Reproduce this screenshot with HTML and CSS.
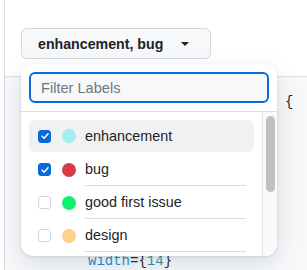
FILE: index.html
```html
<!DOCTYPE html>
<html>
<head>
<meta charset="utf-8">
<link rel="stylesheet" href="styles.css">
</head>
<body>
<div class="page">
  <div class="top">
    <button class="picker">
      <span class="picker-label">enhancement, bug</span>
      <span class="caret"></span>
    </button>
  </div>
  <div class="code">
    <div class="line l1">{</div>
    <div class="line">&nbsp;</div>
    <div class="line">&nbsp;</div>
    <div class="line">&nbsp;</div>
    <div class="line">&nbsp;</div>
    <div class="line">&nbsp;</div>
    <div class="line">&nbsp;</div>
    <div class="line">&nbsp;</div>
    <div class="line l9"><span class="attr">width</span><span class="punc">={</span><span class="num">14</span><span class="punc">}</span></div>
  </div>

  <div class="menu">
    <div class="menu-head">
      <div class="filter">Filter Labels</div>
    </div>
    <div class="menu-body">
      <div class="items">
        <div class="item active">
          <span class="cb checked"><svg viewBox="0 0 12 12" width="10" height="10"><path d="M2.5 6.2 L5 8.6 L9.6 3.4" fill="none" stroke="#fff" stroke-width="1.8" stroke-linecap="round" stroke-linejoin="round"/></svg></span>
          <span class="dot" style="background:#a2eeef"></span>
          <span class="name">enhancement</span>
        </div>
        <div class="item">
          <span class="cb checked"><svg viewBox="0 0 12 12" width="10" height="10"><path d="M2.5 6.2 L5 8.6 L9.6 3.4" fill="none" stroke="#fff" stroke-width="1.8" stroke-linecap="round" stroke-linejoin="round"/></svg></span>
          <span class="dot" style="background:#d73a4a"></span>
          <span class="name">bug</span>
        </div>
        <div class="item">
          <span class="cb"></span>
          <span class="dot" style="background:#0ff06c"></span>
          <span class="name">good first issue</span>
        </div>
        <div class="item">
          <span class="cb"></span>
          <span class="dot" style="background:#fdd38c"></span>
          <span class="name">design</span>
        </div>
      </div>
      <div class="scroll"><div class="thumb"></div></div>
    </div>
  </div>
</div>
</body>
</html>
```
FILE: styles.css
```css
* { box-sizing: border-box; }
html, body { margin: 0; padding: 0; }
body {
  width: 307px;
  height: 270px;
  overflow: hidden;
  background: #ffffff;
  font-family: "Liberation Sans", Arial, sans-serif;
  color: #1f2328;
}
.page {
  position: relative;
  margin-left: 4px;
  height: 270px;
  overflow: hidden;
  border-left: 1px solid #d8dee4;
  display: flex;
  flex-direction: column;
}
.top {
  height: 76px;
  flex: none;
  padding: 28px 0 0 16px;
  background: #ffffff;
}
.picker {
  width: 190px;
  height: 31px;
  display: flex;
  align-items: center;
  justify-content: space-between;
  padding: 0 21px 0 16px;
  background: #f6f8fa;
  border: 1px solid #d0d7de;
  border-radius: 6px;
  font-family: "Liberation Sans", Arial, sans-serif;
  font-size: 14.2px;
  font-weight: 700;
  color: #1f2328;
}
.caret {
  width: 0;
  height: 0;
  border-left: 4px solid transparent;
  border-right: 4px solid transparent;
  border-top: 4px solid #1f2328;
}
.code {
  flex: 1;
  background: #f6f8fa;
  border-top: 1px solid #d8dee4;
  padding-top: 16px;
  font-family: "Liberation Mono", "DejaVu Sans Mono", monospace;
  font-size: 14px;
  color: #1f2328;
}
.line {
  height: 19.9px;
  line-height: 19.9px;
  white-space: pre;
}
.l1 { padding-left: 280px; }
.l9 { padding-left: 83px; }
.attr { color: #1c8fd0; }
.num { color: #2a95a8; }
.punc { color: #24292f; }

.menu {
  position: absolute;
  left: 16px;
  top: 64px;
  width: 256px;
  height: 192px;
  background: #ffffff;
  border-radius: 12px;
  box-shadow: 0 1px 3px rgba(31,35,40,0.12), 0 8px 24px rgba(66,74,83,0.14);
  overflow: hidden;
  display: flex;
  flex-direction: column;
}
.menu-head {
  padding: 8px;
  border-bottom: 1px solid #d8dee4;
}
.filter {
  height: 31px;
  border: 2px solid #0969da;
  border-radius: 6px;
  background: #f6f8fa;
  padding-left: 10px;
  display: flex;
  align-items: center;
  font-size: 14.6px;
  color: #6e7781;
}
.menu-body {
  flex: 1;
  display: flex;
}
.items {
  flex: 1;
  padding: 8px 8px 0 8px;
}
.item {
  height: 33px;
  display: flex;
  align-items: center;
  padding-left: 9px;
  border-radius: 6px;
}
.item.active {
  height: 32px;
  margin-bottom: 1px;
  background: #f0f1f3;
}
.cb {
  width: 13px;
  height: 13px;
  flex: none;
  border: 1px solid #d0d7de;
  border-radius: 3px;
  background: #ffffff;
  display: flex;
  align-items: center;
  justify-content: center;
}
.cb.checked {
  background: #0969da;
  border-color: #0969da;
}
.dot {
  width: 14px;
  height: 14px;
  flex: none;
  border-radius: 50%;
  margin-left: 11px;
}
.name {
  margin-left: 9px;
  margin-right: 8px;
  flex: 1;
  align-self: stretch;
  display: flex;
  align-items: center;
  border-bottom: 1px solid #d8dee4;
  font-size: 14.4px;
  color: #1f2328;
}
.item.active .name { border-bottom-color: transparent; }
.scroll {
  width: 15px;
  flex: none;
  background: #fafafa;
  border-left: 1px solid #e8e8e8;
  padding: 4px 2px 0 3px;
}
.thumb {
  width: 9px;
  height: 76px;
  background: #c1c1c1;
  border-radius: 5px;
}
```
